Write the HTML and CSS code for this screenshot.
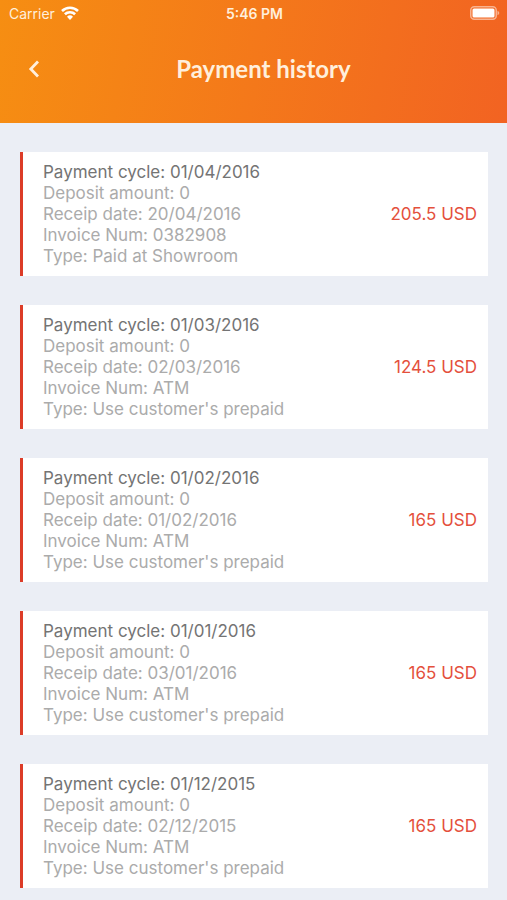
FILE: index.html
```html
<!DOCTYPE html>
<html lang="en">
<head>
<meta charset="utf-8">
<meta name="viewport" content="width=device-width, initial-scale=1">
<title>Payment history</title>
<link rel="stylesheet" href="styles.css">
</head>
<body>
<header class="header">
  <div class="status">
    <span class="carrier">Carrier
      <svg class="wifi" viewBox="0 0 18 14" aria-hidden="true"><path d="M1 5a11.5 11.5 0 0 1 16 0M3.9 8.3a7.3 7.3 0 0 1 10.2 0"/><path class="solid" d="M9 14 6 10.8a4.3 4.3 0 0 1 6 0z"/></svg>
    </span>
    <span class="time">5:46 PM</span>
    <svg class="battery" viewBox="0 0 30 14" aria-hidden="true"><rect class="case" x=".75" y=".75" width="25.5" height="12.5" rx="3.5"/><rect class="charge" x="2.5" y="2.5" width="22" height="9" rx="1.5"/><path class="nub" d="M27.5 4.7q1.8.7 1.8 2.3t-1.8 2.3z"/></svg>
  </div>
  <nav class="bar">
    <button class="back" type="button" aria-label="Back"><svg viewBox="0 0 12 18" aria-hidden="true"><path d="M10 1.5 2.8 9l7.2 7.5"/></svg></button>
    <h1 class="title">Payment history</h1>
  </nav>
</header>
<main class="list">
  <article class="card">
    <div class="details"><h2 class="cycle">Payment cycle: 01/04/2016</h2><p>Deposit amount: 0</p><p>Receip date: 20/04/2016</p><p>Invoice Num: 0382908</p><p>Type: Paid at Showroom</p></div>
    <strong class="amount">205.5 USD</strong>
  </article>
  <article class="card">
    <div class="details"><h2 class="cycle">Payment cycle: 01/03/2016</h2><p>Deposit amount: 0</p><p>Receip date: 02/03/2016</p><p>Invoice Num: ATM</p><p>Type: Use customer's prepaid</p></div>
    <strong class="amount">124.5 USD</strong>
  </article>
  <article class="card">
    <div class="details"><h2 class="cycle">Payment cycle: 01/02/2016</h2><p>Deposit amount: 0</p><p>Receip date: 01/02/2016</p><p>Invoice Num: ATM</p><p>Type: Use customer's prepaid</p></div>
    <strong class="amount">165 USD</strong>
  </article>
  <article class="card">
    <div class="details"><h2 class="cycle">Payment cycle: 01/01/2016</h2><p>Deposit amount: 0</p><p>Receip date: 03/01/2016</p><p>Invoice Num: ATM</p><p>Type: Use customer's prepaid</p></div>
    <strong class="amount">165 USD</strong>
  </article>
  <article class="card">
    <div class="details"><h2 class="cycle">Payment cycle: 01/12/2015</h2><p>Deposit amount: 0</p><p>Receip date: 02/12/2015</p><p>Invoice Num: ATM</p><p>Type: Use customer's prepaid</p></div>
    <strong class="amount">165 USD</strong>
  </article>
</main>
</body>
</html>
```
FILE: styles.css
```css
* { box-sizing: border-box; }
body { margin: 0; background: #ebeef5; font-family: Inter, "Liberation Sans", sans-serif; }
h1, h2, p { margin: 0; }
svg { display: block; fill: none; }
.header { padding-bottom: 12px; background: linear-gradient(100deg, #f68e12, #f26322); color: #ffefdc; }
.status { display: grid; grid-template-columns: 1fr auto 1fr; align-items: center; height: 26px; padding: 0 7px 0 9px; font-size: 14px; }
.carrier { display: flex; align-items: center; gap: 6px; }
.wifi { width: 18px; height: 14px; stroke: #fff; stroke-width: 2.6; }
.wifi .solid { fill: #fff; stroke: none; }
.time { font-weight: 600; }
.battery { width: 30px; height: 14px; justify-self: end; }
.case { stroke: #fff; stroke-opacity: .5; stroke-width: 1.5; }
.charge { fill: #fff; }
.nub { fill: #fff; fill-opacity: .5; }
.bar { display: grid; grid-template-columns: 52px 1fr 32px; align-items: center; height: 85px; }
.back { display: grid; place-items: center end; width: 40px; height: 44px; padding: 0; border: 0; background: none; color: #fff; }
.back svg { width: 12px; height: 18px; stroke: #ffefdc; stroke-width: 2.8; }
.title { font-family: Lato, sans-serif; font-size: 24px; line-height: 28px; font-weight: 700; text-align: center; }
.list { display: grid; gap: 29px; padding: 29px 19px 14px 20px; }
.card { display: flex; align-items: center; justify-content: space-between; padding: 10px 11px 9px 20px; border-left: 3px solid #dc3c28; background: #fff; }
.details { font-size: 17px; line-height: 21px; color: #ababab; }
.cycle { font-size: 17px; line-height: 21px; font-weight: 400; color: #747474; }
.amount { font-size: 17px; line-height: 21px; font-weight: 400; color: #e4503c; }
```
